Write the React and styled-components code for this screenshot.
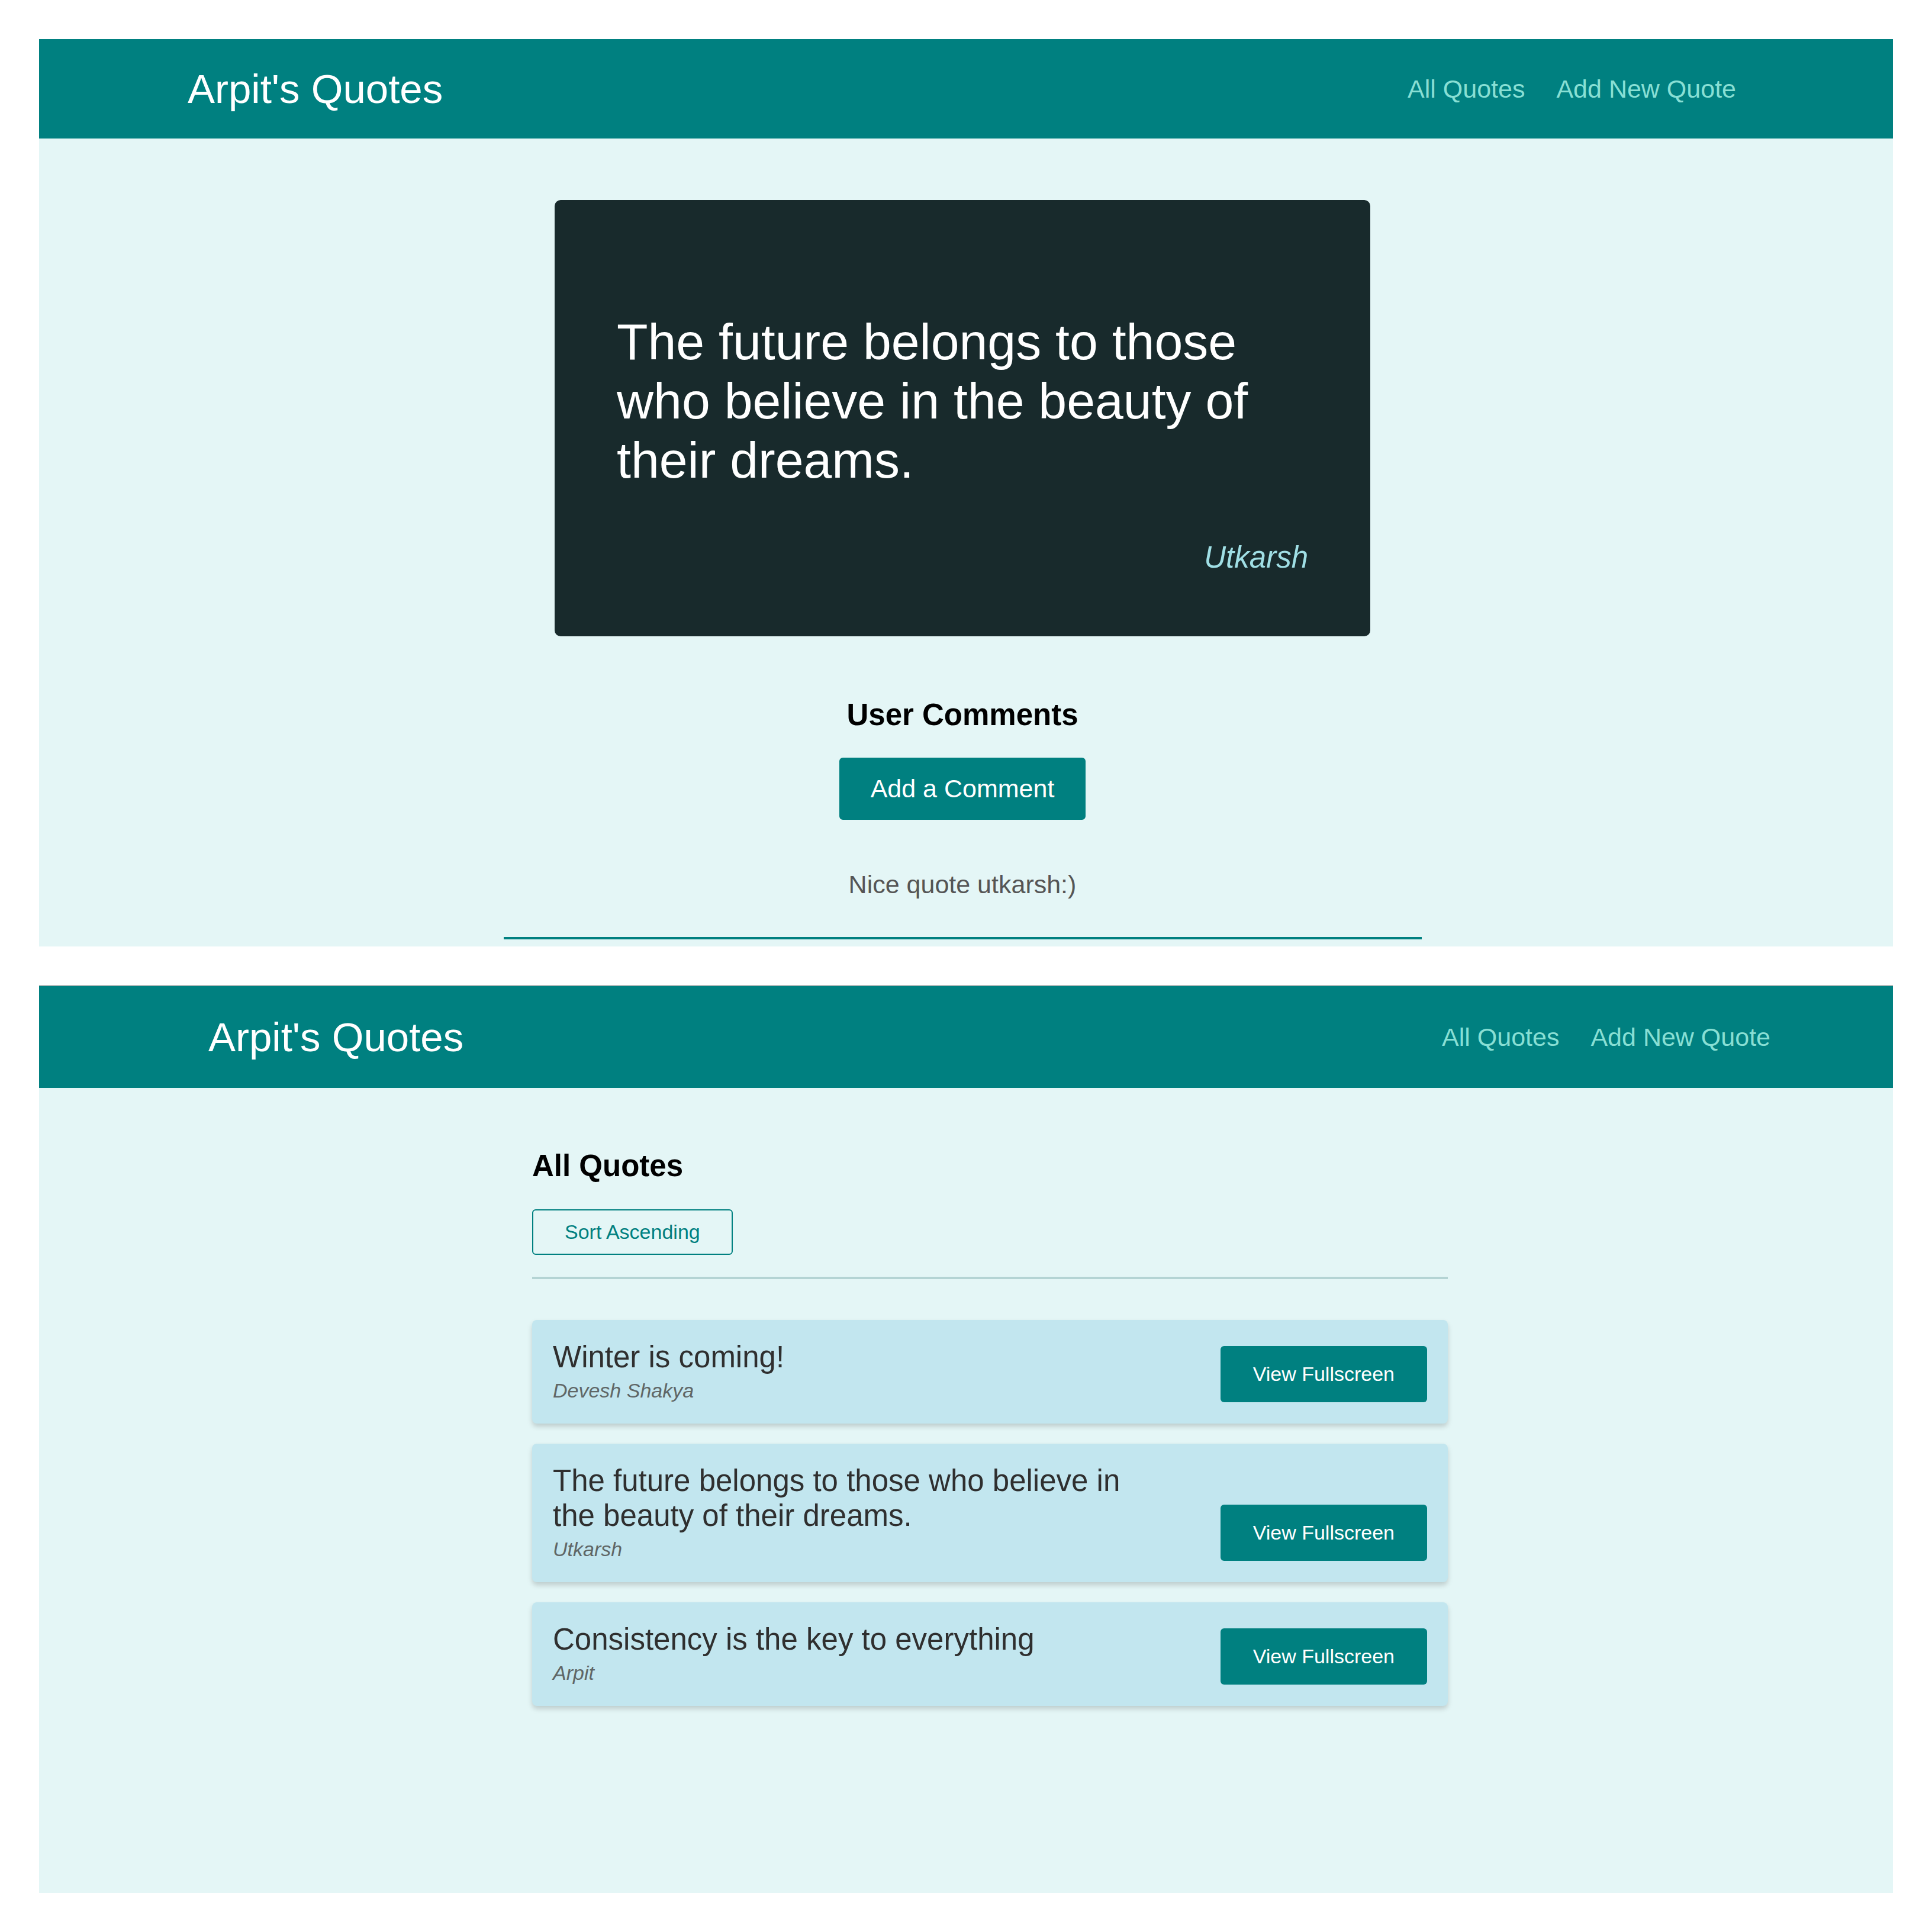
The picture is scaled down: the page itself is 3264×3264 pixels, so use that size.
import React from "react";
import styled, { createGlobalStyle } from "styled-components";

const GlobalStyle = createGlobalStyle`
  html, body { margin: 0; padding: 0; background: #ffffff; }
  body { font-family: "Liberation Sans", Arial, sans-serif; }
  * { box-sizing: border-box; }
`;

const Canvas = styled.div`
  width: 3264px;
  height: 3264px;
  padding: 66px;
  display: flex;
  flex-direction: column;
  gap: 66px;
  background: #ffffff;
`;

const Frame = styled.section`
  width: 3132px;
  height: 1533px;
  overflow: hidden;
  background: #e4f6f6;
`;

const Page = styled.div`
  width: ${(p) => p.$width}px;
  min-height: 100%;
  background: #e4f6f6;
`;

const Header = styled.header`
  height: ${(p) => p.$height}px;
  background: #008080;
  display: flex;
  align-items: center;
  justify-content: space-between;
  padding: 0 ${(p) => p.$padRight}px 0 ${(p) => p.$padLeft}px;
  border-top: ${(p) => (p.$edge ? "1px solid #4f6565" : "none")};
`;

const Brand = styled.div`
  font-size: 69px;
  color: #ffffff;
  line-height: normal;
`;

const Nav = styled.nav`
  display: flex;
  gap: 53px;
`;

const NavLink = styled.a`
  font-size: 43px;
  color: #88dfd4;
  text-decoration: none;
`;

const Main = styled.main`
  display: flex;
  flex-direction: column;
  align-items: center;
  padding-top: ${(p) => p.$top}px;
  padding-right: ${(p) => p.$gutter || 0}px;
`;

const QuoteCard = styled.figure`
  width: 1378px;
  margin: 0;
  padding: 104px 105px;
  background: #182a2c;
  border-radius: 10px;
`;

const QuoteText = styled.blockquote`
  margin: 85px 0;
  font-size: 86px;
  line-height: 100px;
  color: #ffffff;
`;

const QuoteAuthor = styled.figcaption`
  font-size: 51px;
  font-style: italic;
  text-align: right;
  color: #a0dfe5;
`;

const Comments = styled.section`
  width: 1551px;
  margin-top: 103px;
  display: flex;
  flex-direction: column;
  align-items: center;
`;

const SectionTitle = styled.h2`
  margin: 0;
  font-size: 51px;
  font-weight: 700;
  color: #000000;
  line-height: normal;
`;

const SolidButton = styled.button`
  font-family: "Liberation Sans", Arial, sans-serif;
  font-size: ${(p) => p.$size}px;
  line-height: normal;
  color: #ffffff;
  background: #008080;
  border: none;
  border-radius: 6px;
  padding: ${(p) => p.$padY}px ${(p) => p.$padX}px;
  margin-top: ${(p) => p.$mt || 0}px;
  cursor: pointer;
  white-space: nowrap;
  flex-shrink: 0;
`;

const CommentList = styled.ul`
  list-style: none;
  margin: 0;
  padding: 0;
  width: 100%;
`;

const CommentItem = styled.li`
  padding: 85px 0 64px;
  border-bottom: 4px solid #008080;
  text-align: center;
  font-size: 43px;
  color: #555555;
`;

const ListSection = styled.section`
  width: 1547px;
  display: flex;
  flex-direction: column;
  align-items: flex-start;
`;

const OutlineButton = styled.button`
  font-family: "Liberation Sans", Arial, sans-serif;
  font-size: 34px;
  line-height: normal;
  color: #008080;
  background: transparent;
  border: 2px solid #008080;
  border-radius: 6px;
  padding: 17px 53px;
  margin-top: 44px;
  cursor: pointer;
`;

const Divider = styled.hr`
  width: 100%;
  height: 4px;
  margin: 37px 0 0;
  border: none;
  background: #b4d4d4;
`;

const QuoteList = styled.ul`
  list-style: none;
  margin: 69px 0 0;
  padding: 0;
  width: 100%;
  display: flex;
  flex-direction: column;
  gap: 34px;
`;

const QuoteRow = styled.li`
  display: flex;
  align-items: flex-end;
  justify-content: space-between;
  padding: 33px 35px 36px;
  background: #c2e6ef;
  border-radius: 8px;
  box-shadow: 0 5px 9px rgba(0, 0, 0, 0.17);
`;

const RowText = styled.div`
  max-width: 1010px;
`;

const RowQuote = styled.p`
  margin: 0;
  font-size: 51px;
  line-height: normal;
  color: #2f2f2f;
`;

const RowAuthor = styled.p`
  margin: 8px 0 0;
  font-size: 34px;
  font-style: italic;
  line-height: normal;
  color: #5f6666;
`;

const quotes = [
  { text: "Winter is coming!", author: "Devesh Shakya" },
  { text: "The future belongs to those who believe in the beauty of their dreams.", author: "Utkarsh" },
  { text: "Consistency is the key to everything", author: "Arpit" },
];

function TopBar({ height, padLeft, padRight, edge }) {
  return (
    <Header $height={height} $padLeft={padLeft} $padRight={padRight} $edge={edge}>
      <Brand>Arpit's Quotes</Brand>
      <Nav>
        <NavLink href="#">All Quotes</NavLink>
        <NavLink href="#">Add New Quote</NavLink>
      </Nav>
    </Header>
  );
}

export default function App() {
  return (
    <>
      <GlobalStyle />
      <Canvas>
        <Frame>
          <Page $width={3132}>
            <TopBar height={168} padLeft={251} padRight={265} />
            <Main $top={104} $gutter={12}>
              <QuoteCard>
                <QuoteText>
                  The future belongs to those who believe in the beauty of their dreams.
                </QuoteText>
                <QuoteAuthor>Utkarsh</QuoteAuthor>
              </QuoteCard>
              <Comments>
                <SectionTitle>User Comments</SectionTitle>
                <SolidButton $size={43} $padY={28} $padX={53} $mt={43}>Add a Comment</SolidButton>
                <CommentList>
                  <CommentItem>Nice quote utkarsh:)</CommentItem>
                </CommentList>
              </Comments>
            </Main>
          </Page>
        </Frame>
        <Frame>
          <Page $width={3213}>
            <TopBar height={173} padLeft={286} padRight={288} edge />
            <Main $top={102}>
              <ListSection>
                <SectionTitle>All Quotes</SectionTitle>
                <OutlineButton>Sort Ascending</OutlineButton>
                <Divider />
                <QuoteList>
                  {quotes.map((q) => (
                    <QuoteRow key={q.text}>
                      <RowText>
                        <RowQuote>{q.text}</RowQuote>
                        <RowAuthor>{q.author}</RowAuthor>
                      </RowText>
                      <SolidButton $size={34} $padY={28} $padX={55}>View Fullscreen</SolidButton>
                    </QuoteRow>
                  ))}
                </QuoteList>
              </ListSection>
            </Main>
          </Page>
        </Frame>
      </Canvas>
    </>
  );
}
